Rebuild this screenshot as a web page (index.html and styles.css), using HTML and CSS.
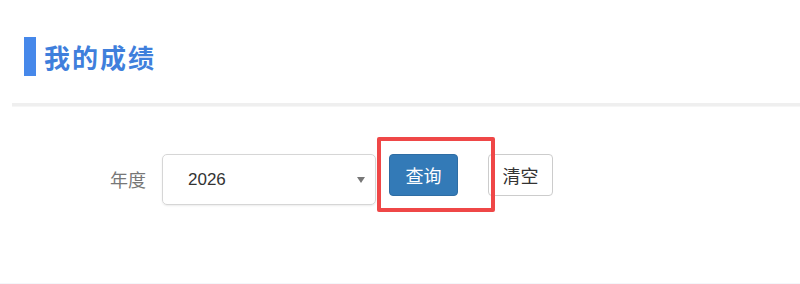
FILE: index.html
```html
<!DOCTYPE html>
<html lang="zh">
<head>
<meta charset="utf-8">
<title>我的成绩</title>
<link rel="stylesheet" href="styles.css">
</head>
<body>
<div class="page">
  <div class="header">
    <span class="bar"></span>
    <h1 class="title">我的成绩</h1>
  </div>
  <div class="divider"></div>
  <div class="form">
    <label class="label">年度</label>
    <div class="select">
      <span class="select-value">2026</span>
      <span class="caret"></span>
    </div>
    <div class="actions">
      <button class="btn btn-primary">查询</button>
      <span class="highlight"></span>
    </div>
    <button class="btn btn-default">清空</button>
  </div>
  <div class="footer-line"></div>
</div>
</body>
</html>
```
FILE: styles.css
```css
* { box-sizing: border-box; }
html, body { margin: 0; padding: 0; background: #fff; }
body {
  font-family: "Noto Sans CJK SC", "Liberation Sans", sans-serif;
  width: 800px;
  height: 284px;
  overflow: hidden;
}
.page { position: relative; height: 284px; }
.header {
  display: flex;
  align-items: flex-start;
  padding: 37px 0 0 24px;
  height: 103px;
}
.bar {
  width: 12px;
  height: 39px;
  background: #4688ea;
  flex: none;
}
.title {
  margin: 0 0 0 8px;
  font-size: 26px;
  line-height: 39px;
  font-weight: 700;
  color: #3f7fdc;
  letter-spacing: 2px;
}
.divider {
  margin-left: 12px;
  height: 4px;
  background: #efefef;
  border-bottom: 1px solid #f6f6f6;
}
.form {
  display: flex;
  align-items: flex-start;
  padding: 47px 0 0 110px;
  height: 176px;
}
.label {
  font-size: 18px;
  color: #777;
  line-height: 51px;
  width: 52px;
}
.select {
  width: 214px;
  height: 51px;
  border: 1px solid #d6d6d6;
  border-radius: 5px;
  display: flex;
  align-items: center;
  padding: 0 10px 0 25px;
  box-shadow: 0 1px 2px rgba(0,0,0,0.08);
}
.select-value {
  flex: 1;
  font-family: "Liberation Sans", sans-serif;
  font-size: 17px;
  color: #333;
}
.caret {
  width: 0; height: 0;
  border-left: 4px solid transparent;
  border-right: 4px solid transparent;
  border-top: 6px solid #777;
}
.actions {
  position: relative;
  margin-left: 13px;
  width: 99px;
}
.btn {
  height: 42px;
  border-radius: 4px;
  font-family: "Noto Sans CJK SC", sans-serif;
  font-size: 18px;
  padding: 0;
  cursor: pointer;
}
.btn-primary {
  width: 69px;
  background: #337ab7;
  border: 1px solid #2e6da4;
  color: #fff;
}
.btn-default {
  width: 65px;
  background: #fff;
  border: 1px solid #ccc;
  color: #333;
}
.highlight {
  position: absolute;
  left: -12px;
  top: -17px;
  width: 118px;
  height: 75px;
  border: 4px solid #ef4747;
  border-radius: 2px;
  pointer-events: none;
}
.footer-line {
  height: 4px;
  background: #f4f6fa;
}
```
